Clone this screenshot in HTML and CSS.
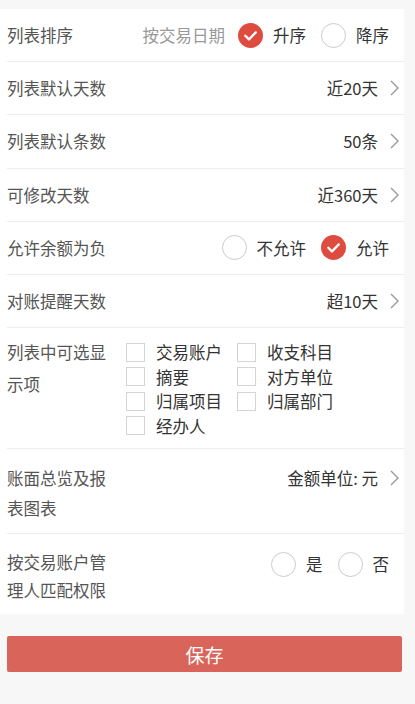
FILE: index.html
```html
<!DOCTYPE html>
<html lang="zh-CN">
<head>
    <meta charset="UTF-8">
    <meta name="viewport" content="width=device-width, initial-scale=1.0">
    <title>设置</title>
    <link rel="stylesheet" href="styles.css">
</head>
<body>
    <div class="page">
        <div class="card">
            <div class="row">
                <div class="label">列表排序</div>
                <div class="options">
                    <span class="hint">按交易日期</span>
                    <span class="radio checked"><svg viewBox="0 0 25 25" width="25" height="25"><circle cx="12.5" cy="12.5" r="12.5" fill="#de4c40"/><polyline points="7.3,12.8 11,16.4 17.8,9.4" fill="none" stroke="#fff" stroke-width="2.3" stroke-linecap="round" stroke-linejoin="round"/></svg></span>
                    <span class="opt">升序</span>
                    <span class="radio"></span>
                    <span class="opt">降序</span>
                </div>
            </div>
            <div class="row link">
                <div class="label">列表默认天数</div>
                <div class="value">近20天</div>
                <svg class="chev" viewBox="0 0 9 16" width="9" height="16"><polyline points="1,1 8,8 1,15" fill="none" stroke="#999" stroke-width="1.4"/></svg>
            </div>
            <div class="row link">
                <div class="label">列表默认条数</div>
                <div class="value">50条</div>
                <svg class="chev" viewBox="0 0 9 16" width="9" height="16"><polyline points="1,1 8,8 1,15" fill="none" stroke="#999" stroke-width="1.4"/></svg>
            </div>
            <div class="row link">
                <div class="label">可修改天数</div>
                <div class="value">近360天</div>
                <svg class="chev" viewBox="0 0 9 16" width="9" height="16"><polyline points="1,1 8,8 1,15" fill="none" stroke="#999" stroke-width="1.4"/></svg>
            </div>
            <div class="row">
                <div class="label">允许余额为负</div>
                <div class="options">
                    <span class="radio"></span>
                    <span class="opt">不允许</span>
                    <span class="radio checked"><svg viewBox="0 0 25 25" width="25" height="25"><circle cx="12.5" cy="12.5" r="12.5" fill="#de4c40"/><polyline points="7.3,12.8 11,16.4 17.8,9.4" fill="none" stroke="#fff" stroke-width="2.3" stroke-linecap="round" stroke-linejoin="round"/></svg></span>
                    <span class="opt">允许</span>
                </div>
            </div>
            <div class="row link">
                <div class="label">对账提醒天数</div>
                <div class="value">超10天</div>
                <svg class="chev" viewBox="0 0 9 16" width="9" height="16"><polyline points="1,1 8,8 1,15" fill="none" stroke="#999" stroke-width="1.4"/></svg>
            </div>
            <div class="row tall checks-row">
                <div class="label wrap">列表中可选显示项</div>
                <div class="checks">
                    <label class="check"><span class="box"></span>交易账户</label>
                    <label class="check"><span class="box"></span>收支科目</label>
                    <label class="check"><span class="box"></span>摘要</label>
                    <label class="check"><span class="box"></span>对方单位</label>
                    <label class="check"><span class="box"></span>归属项目</label>
                    <label class="check"><span class="box"></span>归属部门</label>
                    <label class="check"><span class="box"></span>经办人</label>
                </div>
            </div>
            <div class="row tall link report-row">
                <div class="label wrap">账面总览及报表图表</div>
                <div class="value">金额单位: 元</div>
                <svg class="chev" viewBox="0 0 9 16" width="9" height="16"><polyline points="1,1 8,8 1,15" fill="none" stroke="#999" stroke-width="1.4"/></svg>
            </div>
            <div class="row tall last perm-row">
                <div class="label wrap">按交易账户管理人匹配权限</div>
                <div class="options">
                    <span class="radio"></span>
                    <span class="opt">是</span>
                    <span class="radio"></span>
                    <span class="opt">否</span>
                </div>
            </div>
        </div>
        <button class="save">保存</button>
    </div>
</body>
</html>
```

FILE: styles.css
```css
body {
    margin: 0;
    background-color: #f7f7f7;
    font-family: "Noto Sans CJK SC", "Noto Sans", sans-serif;
    font-size: 16.5px;
    color: #333;
}

.page {
    width: 404px;
    padding-top: 9px;
}

.card {
    background-color: #fff;
    padding-left: 7px;
}

.row {
    display: flex;
    align-items: center;
    height: 52.2px;
    border-bottom: 1px solid #eee;
    padding-right: 15px;
}

.row.link {
    padding-right: 5px;
}

.row.last {
    border-bottom: none;
}

.label {
    color: #555;
    flex: 1;
}

.options {
    display: flex;
    align-items: center;
}

.hint {
    color: #999;
    margin-right: 13px;
}

.radio {
    width: 25px;
    height: 25px;
    box-sizing: border-box;
    border: 1px solid #ccc;
    border-radius: 50%;
    margin-right: 10px;
    margin-left: 15px;
}

.hint + .radio {
    margin-left: 0;
}

.radio.checked {
    border: none;
}

.radio svg {
    display: block;
}

.value {
    color: #333;
}

.chev {
    margin-left: 12px;
}

/* multi-line rows */
.row.tall {
    height: auto;
    align-items: flex-start;
}

.label.wrap {
    flex: none;
    width: 103px;
}

.checks-row {
    padding-top: 12px;
    padding-bottom: 10px;
}

.checks-row .label {
    line-height: 32px;
    margin-top: -4px;
    margin-right: 16px;
}

.checks {
    display: grid;
    grid-template-columns: 111px 111px;
    grid-auto-rows: 24.5px;
}

.check {
    display: flex;
    align-items: center;
    color: #333;
}

.box {
    width: 19px;
    height: 19px;
    box-sizing: border-box;
    border: 1px solid #d4d4d4;
    margin-right: 11px;
}

.report-row {
    padding-top: 14px;
    padding-bottom: 10px;
    line-height: 30px;
}

.report-row .label {
    margin-right: auto;
}

.report-row .chev {
    margin-top: 7px;
}

.perm-row {
    padding-top: 14px;
    padding-bottom: 10px;
    line-height: 28px;
}

.perm-row .label {
    margin-right: auto;
}

.perm-row .options {
    height: 28px;
    margin-top: 2px;
}

.save {
    display: block;
    margin: 22px 0 0 7px;
    width: 395px;
    height: 36px;
    border: none;
    border-radius: 2px;
    background-color: #d9655a;
    color: #fff;
    font-family: "Noto Sans CJK SC", sans-serif;
    font-size: 19px;
    cursor: pointer;
}
```
